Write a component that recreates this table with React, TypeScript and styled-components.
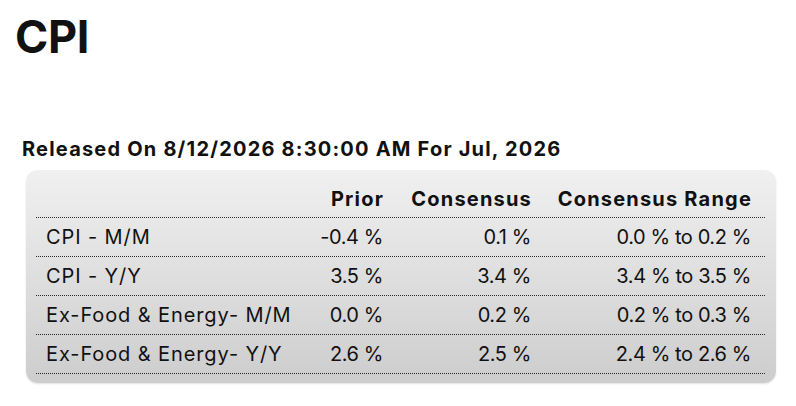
import React from "react";
import styled, { createGlobalStyle } from "styled-components";

const Global = createGlobalStyle`
  html, body { margin: 0; padding: 0; background: #fff; }
  body { font-family: Inter, "Liberation Sans", sans-serif; color: #111; }
`;

const Page = styled.div`
  width: 796px;
  height: 406px;
  box-sizing: border-box;
  padding: 10px 0 0 15px;
`;

const Title = styled.h1`
  margin: 0;
  font-size: 45px;
  font-weight: 700;
  line-height: 54px;
  letter-spacing: -0.3px;
`;

const Released = styled.h2`
  margin: 73px 0 0 7px;
  font-size: 20px;
  font-weight: 700;
  line-height: 24px;
  letter-spacing: 1.2px;
`;

const Box = styled.div`
  margin: 9px 0 0 11px;
  width: 750px;
  box-sizing: border-box;
  padding: 10px 10px 9px;
  border-radius: 12px;
  background: linear-gradient(#f0f0f0, #cdcdcd);
  box-shadow: 0 1px 2px rgba(0, 0, 0, 0.12);
`;

const Grid = styled.div`
  display: grid;
  grid-template-columns: 274px 88px 148px 220px;
`;

type Kind = "head" | "label" | "num";

const Cell = styled.div<{ $kind: Kind }>`
  height: ${(p) => (p.$kind === "head" ? 38 : 39)}px;
  box-sizing: border-box;
  padding-bottom: 1px;
  display: flex;
  align-items: center;
  justify-content: ${(p) => (p.$kind === "label" ? "flex-start" : "flex-end")};
  padding-left: ${(p) => (p.$kind === "label" ? "10px" : "0")};
  padding-right: ${(p) => (p.$kind === "label" ? "0" : p.$kind === "head" ? "14px" : "15px")};
  background-image: linear-gradient(to right, #2a2a2a 50%, transparent 50%);
  background-size: 2px 1px;
  background-repeat: repeat-x;
  background-position: left bottom;
  font-size: 20px;
  font-weight: ${(p) => (p.$kind === "head" ? 700 : 400)};
  letter-spacing: ${(p) => (p.$kind === "head" ? "1.2px" : p.$kind === "label" ? "0.9px" : "-0.4px")};
  white-space: nowrap;
`;

const rows = [
  ["CPI - M/M", "-0.4 %", "0.1 %", "0.0 % to 0.2 %"],
  ["CPI - Y/Y", "3.5 %", "3.4 %", "3.4 % to 3.5 %"],
  ["Ex-Food & Energy- M/M", "0.0 %", "0.2 %", "0.2 % to 0.3 %"],
  ["Ex-Food & Energy- Y/Y", "2.6 %", "2.5 %", "2.4 % to 2.6 %"],
];

export default function App() {
  return (
    <Page>
      <Global />
      <Title>CPI</Title>
      <Released>Released On 8/12/2026 8:30:00 AM For Jul, 2026</Released>
      <Box>
        <Grid>
          <Cell $kind="head" />
          <Cell $kind="head">Prior</Cell>
          <Cell $kind="head">Consensus</Cell>
          <Cell $kind="head">Consensus Range</Cell>
          {rows.map((r) => (
            <React.Fragment key={r[0]}>
              <Cell $kind="label">{r[0]}</Cell>
              <Cell $kind="num">{r[1]}</Cell>
              <Cell $kind="num">{r[2]}</Cell>
              <Cell $kind="num">{r[3]}</Cell>
            </React.Fragment>
          ))}
        </Grid>
      </Box>
    </Page>
  );
}
